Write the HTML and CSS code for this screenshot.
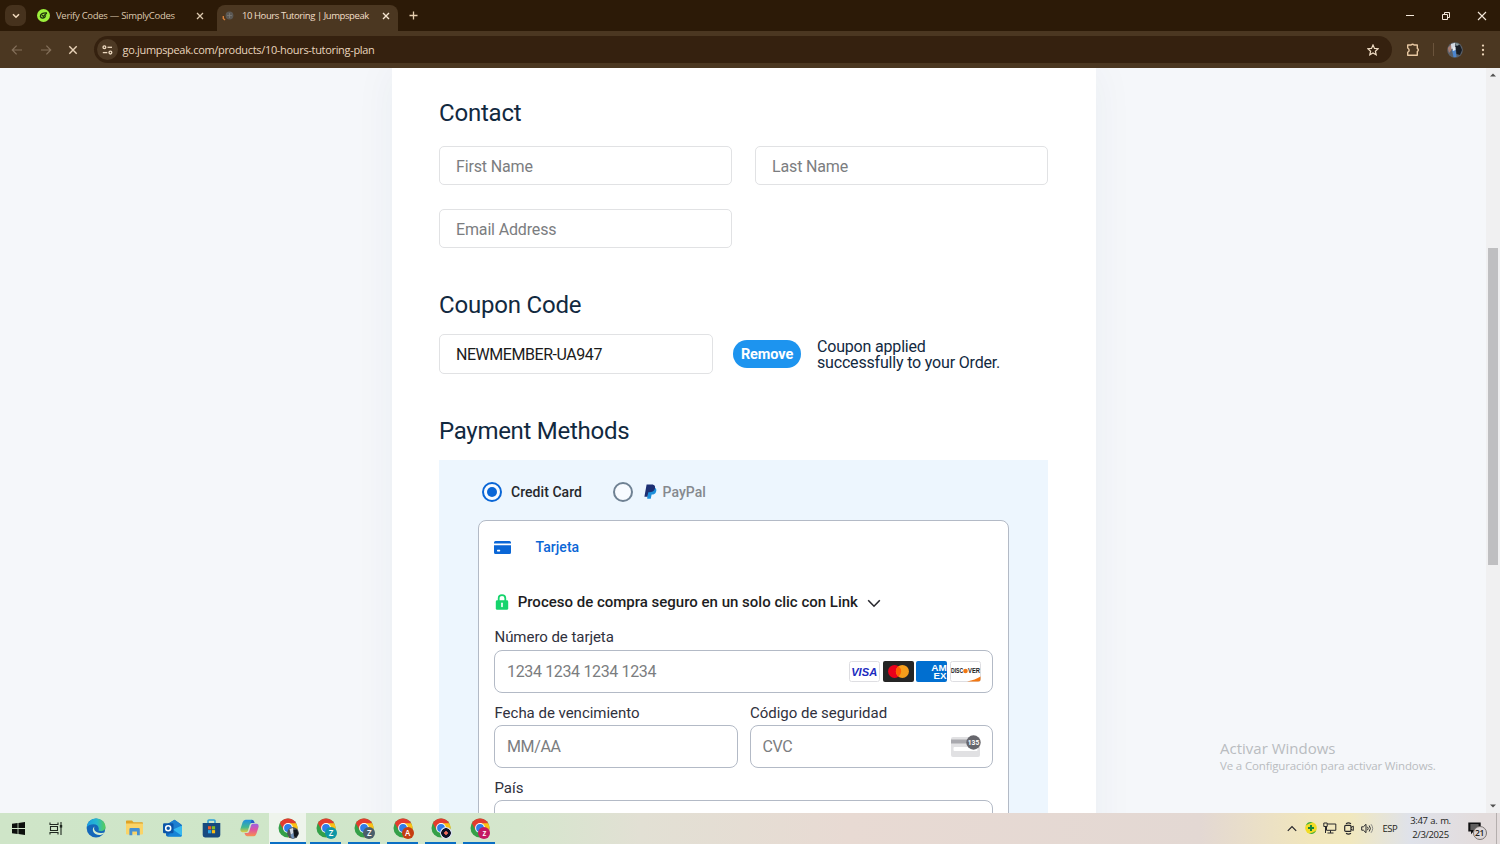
FILE: index.html
```html
<!DOCTYPE html>
<html lang="es">
<head>
    <meta charset="UTF-8">
    <meta name="viewport" content="width=device-width, initial-scale=1.0">
    <title>10 Hours Tutoring | Jumpspeak</title>
    <link rel="stylesheet" href="styles.css">
</head>
<body>

    <!-- Shared Chrome logo -->
    <svg class="defs" width="0" height="0">
        <symbol id="chrome" viewBox="0 0 20 20">
            <circle cx="10" cy="10" r="9.5" fill="#34a048"/>
            <path d="M10 10 L1.8 5.2 A9.5 9.5 0 0 1 18.2 5.2 Z" fill="#e33b2e"/>
            <path d="M10 5.2 H18.2 A9.5 9.5 0 0 1 10 19.5 L14.2 12.4 Z" fill="#fbc116"/>
            <path d="M1.8 5.2 L5.8 12.2 L10 10 L10 5.2 Z" fill="#e33b2e"/>
            <circle cx="10" cy="10" r="4.9" fill="#fff"/>
            <circle cx="10" cy="10" r="3.9" fill="#2f7de9"/>
        </symbol>
    </svg>

    <!-- Tab Strip -->
    <header class="tab-strip">
        <div class="tab-search">
            <svg width="8" height="6" viewBox="0 0 8 6"><path d="M1 1.2 L4 4.2 L7 1.2" fill="none" stroke="#f0d9bd" stroke-width="1.6"/></svg>
        </div>
        <div class="tab">
            <svg class="favicon" width="13" height="13" viewBox="0 0 13 13"><circle cx="6.5" cy="6.5" r="6.5" fill="#9cf03c"/><path d="M9.8 4 C6 3.6 3.2 5 3.4 7.5 C4 9.8 8 9.6 8.7 6.3" fill="none" stroke="#20320c" stroke-width="1.3"/><path d="M5 6.2 L6.3 7.5 L9.8 4" fill="none" stroke="#20320c" stroke-width="1.2"/></svg>
            <span class="tab-title title-codes">Verify Codes — SimplyCodes</span>
            <svg class="tab-close" width="8" height="8" viewBox="0 0 8 8"><path d="M1 1 L7 7 M7 1 L1 7" stroke="#dcc8ae" stroke-width="1.3"/></svg>
        </div>
        <div class="tab tab-active">
            <svg class="favicon" width="12" height="12" viewBox="0 0 12 12"><circle cx="7.5" cy="5.5" r="3.9" fill="#5b5854"/><path d="M5 5.5 H10 M7.5 3 V8" stroke="#7b7873" stroke-width=".8"/><path d="M1.3 6 V8.5 L3 10" fill="none" stroke="#d9803a" stroke-width="1.4"/></svg>
            <span class="tab-title title-tutoring">10 Hours Tutoring | Jumpspeak</span>
            <svg class="tab-close" width="8" height="8" viewBox="0 0 8 8"><path d="M1 1 L7 7 M7 1 L1 7" stroke="#f6e6d2" stroke-width="1.4"/></svg>
        </div>
        <svg class="new-tab" width="9" height="9" viewBox="0 0 9 9"><path d="M4.5 .5 V8.5 M.5 4.5 H8.5" stroke="#e6cfb0" stroke-width="1.3"/></svg>
        <div class="window-buttons">
            <svg width="10" height="10" viewBox="0 0 10 10"><path d="M1 4.5 H9" stroke="#f4e8da" stroke-width="1"/></svg>
            <svg width="10" height="10" viewBox="0 0 10 10"><path d="M1.5 3.5 H6.5 V8.5 H1.5 Z M3.5 3.5 V1.5 H8.5 V6.5 H6.5" fill="none" stroke="#f4e8da" stroke-width="1"/></svg>
            <svg width="10" height="10" viewBox="0 0 10 10"><path d="M1 1 L9 9 M9 1 L1 9" stroke="#f4e8da" stroke-width="1.1"/></svg>
        </div>
    </header>

    <!-- Toolbar -->
    <nav class="toolbar">
        <div class="nav-buttons">
            <svg width="12" height="12" viewBox="0 0 12 12"><path d="M11 6 H1.5 M5.6 1.6 L1.3 6 L5.6 10.4" fill="none" stroke="#84705a" stroke-width="1.2"/></svg>
            <svg width="12" height="12" viewBox="0 0 12 12"><path d="M1 6 H10.5 M6.4 1.6 L10.7 6 L6.4 10.4" fill="none" stroke="#84705a" stroke-width="1.2"/></svg>
            <svg width="10" height="10" viewBox="0 0 10 10"><path d="M1.3 1.3 L8.7 8.7 M8.7 1.3 L1.3 8.7" stroke="#e8d2b8" stroke-width="1.4"/></svg>
        </div>
        <div class="address-bar">
            <div class="site-info">
                <svg width="11" height="10" viewBox="0 0 11 10"><g fill="none" stroke="#ecd8bf" stroke-width="1.3"><circle cx="2.4" cy="2.3" r="1.4"/><path d="M5.5 2.3 H10"/><circle cx="8.4" cy="7.6" r="1.4"/><path d="M.8 7.6 H5.3"/></g></svg>
            </div>
            <span class="url">go.jumpspeak.com/products/10-hours-tutoring-plan</span>
            <svg class="star" width="12" height="12" viewBox="0 0 12 12"><path d="M6 1 L7.5 4.4 L11.2 4.7 L8.4 7.2 L9.2 10.8 L6 8.9 L2.8 10.8 L3.6 7.2 L.8 4.7 L4.5 4.4 Z" fill="none" stroke="#f0dcc3" stroke-width="1.2"/></svg>
        </div>
        <svg class="extensions" width="14" height="14" viewBox="0 0 14 14"><path d="M1.7 2 H5 Q6.6 .4 8.2 2 H11.3 V5.4 Q13.4 7 11.3 8.6 V12.3 H1.7 V9.3 Q4.6 7.2 1.7 5 Z" fill="none" stroke="#e8c8a2" stroke-width="1.4" stroke-linejoin="round"/></svg>
        <span class="separator"></span>
        <svg class="avatar" width="16" height="16" viewBox="0 0 16 16"><circle cx="8" cy="8" r="7.8" fill="#59616b"/><path d="M4 2 L8 .8 L8 6 L4 7 Z" fill="#d3dae3"/><path d="M.8 6 L4 2.5 L4.5 8 L2 11 Z" fill="#a67c70"/><path d="M8.5 4 L13 3 L15 8 L13 13 L9.5 12 Z" fill="#171d25"/><path d="M8 1 L12 2 L10 4 Z" fill="#8ba0a0"/><path d="M5 8 L8.5 7 L9.5 15 L6.5 15.3 Z" fill="#4b86cf"/><path d="M5.5 6 L8.5 5 V8 L6 9 Z" fill="#e9edf1"/></svg>
        <svg class="menu-dots" width="4" height="12" viewBox="0 0 4 12"><g fill="#ecd5b9"><circle cx="2" cy="1.6" r="1.15"/><circle cx="2" cy="6" r="1.15"/><circle cx="2" cy="10.4" r="1.15"/></g></svg>
    </nav>

    <div class="viewport">
        <main class="page">
            <div class="checkout">
                <!-- Contact -->
                <h2 class="title-contact">Contact</h2>
                <div class="contact-fields">
                    <input class="field" type="text" placeholder="First Name">
                    <input class="field" type="text" placeholder="Last Name">
                    <input class="field" type="email" placeholder="Email Address">
                </div>

                <!-- Coupon -->
                <h2 class="title-coupon">Coupon Code</h2>
                <div class="coupon">
                    <input class="field coupon-code" type="text" value="NEWMEMBER-UA947">
                    <button class="btn-remove" type="button">Remove</button>
                    <p class="coupon-message">Coupon applied<br>successfully to your Order.</p>
                </div>

                <!-- Payment -->
                <h2 class="title-payment">Payment Methods</h2>
                <div class="payment">
                    <div class="methods">
                        <span class="radio radio-checked"></span>
                        <span class="method-name">Credit Card</span>
                        <span class="radio"></span>
                        <svg class="paypal-icon" width="13" height="15" viewBox="0 0 13 15"><path d="M3.6 3.6 H9.6 C12.4 4 12.8 6 12 8 C11.3 9.9 9.8 10.5 7.6 10.5 L6.8 14.7 H3.2 Z" fill="#1c8fdb"/><path d="M2.6 .5 H7.8 C10.8 .6 11.7 2.6 10.8 5 C10 7.5 8 8.2 5.2 8.2 H4.3 L3.4 12.7 H.4 Z" fill="#1d2f73"/></svg>
                        <span class="method-name method-paypal">PayPal</span>
                    </div>
                    <div class="card-box">
                        <div class="card-tab">
                            <svg width="17" height="13" viewBox="0 0 17 13"><path d="M1.5 0 H15.5 Q17 0 17 1.5 V2.5 H0 V1.5 Q0 0 1.5 0 Z M0 4.3 H17 V11.5 Q17 13 15.5 13 H1.5 Q0 13 0 11.5 Z" fill="#0a66d6"/><rect x="3" y="8.8" width="3.2" height="1.6" rx=".6" fill="#fff"/></svg>
                            <span>Tarjeta</span>
                        </div>
                        <div class="link-row">
                            <svg width="14" height="16" viewBox="0 0 14 16"><path d="M3.7 7 V4.2 C3.7 0 10.3 0 10.3 4.2 V7" fill="none" stroke="#15d46c" stroke-width="1.8"/><rect x=".8" y="6.3" width="12.4" height="9.5" rx="1.4" fill="#15d46c"/><path d="M7 9.3 V12.4" stroke="#fff" stroke-width="1.6" stroke-linecap="round"/></svg>
                            <span>Proceso de compra seguro en un solo clic con Link</span>
                            <svg class="chevron" width="14" height="9" viewBox="0 0 14 9"><path d="M1.2 1.2 L7 7.2 L12.8 1.2" fill="none" stroke="#27272d" stroke-width="1.6"/></svg>
                        </div>
                        <div class="card-form">
                            <label class="card-field card-number">
                                <span class="label-number">Número de tarjeta</span>
                                <div class="input-box">
                                    <input class="input-number" type="text" placeholder="1234 1234 1234 1234">
                                    <div class="brands">
                                        <svg width="31" height="21" viewBox="0 0 31 21"><rect x=".5" y=".5" width="30" height="20" rx="2" fill="#fff" stroke="#dedee2"/><text x="2.2" y="14.6" textLength="26" lengthAdjust="spacingAndGlyphs" class="visa">VISA</text></svg>
                                        <svg width="31" height="21" viewBox="0 0 31 21"><rect width="31" height="21" rx="2" fill="#252525"/><circle cx="11.6" cy="10.4" r="6.5" fill="#eb001b"/><circle cx="19.4" cy="10.4" r="6.5" fill="#f79e1b"/><path d="M15.5 5.2 A6.5 6.5 0 0 1 15.5 15.6 A6.5 6.5 0 0 1 15.5 5.2 Z" fill="#ff5f00"/></svg>
                                        <svg width="31" height="21" viewBox="0 0 31 21"><rect width="31" height="21" rx="2" fill="#016fd0"/><text x="15.3" y="10" textLength="15.5" lengthAdjust="spacingAndGlyphs" class="amex">AM</text><text x="17.5" y="18" textLength="13" lengthAdjust="spacingAndGlyphs" class="amex">EX</text></svg>
                                        <svg width="31" height="21" viewBox="0 0 31 21"><rect x=".5" y=".5" width="30" height="20" rx="2" fill="#fff" stroke="#dedee2"/><path d="M30.5 15.5 V18.5 Q30.5 20.5 28.5 20.5 H17 Q25.5 18.8 30.5 15.5 Z" fill="#f27712"/><text x="1" y="12.3" textLength="12.2" lengthAdjust="spacingAndGlyphs" class="discover">DISC</text><circle cx="15.5" cy="10" r="2.3" fill="#f27712"/><text x="18" y="12.3" textLength="12" lengthAdjust="spacingAndGlyphs" class="discover">VER</text></svg>
                                    </div>
                                </div>
                            </label>
                            <label class="card-field">
                                <span class="label-expiry">Fecha de vencimiento</span>
                                <div class="input-box"><input type="text" placeholder="MM/AA"></div>
                            </label>
                            <label class="card-field">
                                <span class="label-cvc">Código de seguridad</span>
                                <div class="input-box">
                                    <input class="input-cvc" type="text" placeholder="CVC">
                                    <svg class="cvc-icon" width="31" height="23" viewBox="0 0 31 23"><rect x="1" y="2" width="29" height="20" rx="2" fill="#e1e1e3"/><rect x="1" y="4.5" width="29" height="4" fill="#a9a9ae"/><rect x="3.5" y="12" width="24" height="4" rx="1" fill="#fff"/><circle cx="23.5" cy="7.5" r="7.2" fill="#66666c"/><text x="17.8" y="10.4" textLength="11.4" lengthAdjust="spacingAndGlyphs" class="cvc-digits">135</text></svg>
                                </div>
                            </label>
                            <label class="card-field card-country">
                                <span>País</span>
                                <div class="input-box"></div>
                            </label>
                        </div>
                    </div>
                </div>
            </div>
            <div class="watermark">
                <p class="watermark-title">Activar Windows</p>
                <p class="watermark-text">Ve a Configuración para activar Windows.</p>
            </div>
        </main>
        <div class="scrollbar">
            <svg width="6" height="4" viewBox="0 0 6 4"><path d="M3 .5 L6 3.6 H0 Z" fill="#505050"/></svg>
            <div class="thumb"></div>
            <svg width="6" height="4" viewBox="0 0 6 4"><path d="M3 3.5 L6 .4 H0 Z" fill="#505050"/></svg>
        </div>
    </div>

    <!-- Taskbar -->
    <footer class="taskbar">
        <div class="task task-start"><svg width="13" height="13" viewBox="0 0 13 13"><path d="M0 1.8 L5.6 1 V6.1 H0 Z M6.4 .9 L13 0 V6.1 H6.4 Z M0 6.9 H5.6 V12 L0 11.2 Z M6.4 6.9 H13 V13 L6.4 12.1 Z" fill="#0c0f0c"/></svg></div>
        <div class="task task-view"><svg width="14" height="13" viewBox="0 0 14 13"><path d="M1 .5 V2.5 H9 V.5 M1 12.5 V10.5 H9 V12.5 M1.5 4.5 H8.5 V8.5 H1.5 Z M12 0 V13" fill="none" stroke="#202820" stroke-width="1.1"/><rect x="10.8" y="3" width="2.4" height="2.6" fill="#202820"/></svg></div>
        <div class="task">
            <svg width="20" height="20" viewBox="0 0 20 20"><defs><linearGradient id="edge" x1="0" x2="1"><stop offset="0" stop-color="#1b9de2"/><stop offset=".55" stop-color="#27b9cf"/><stop offset="1" stop-color="#58ce52"/></linearGradient></defs><circle cx="10" cy="10" r="9.4" fill="#1467b9"/><path d="M.7 9 C1.5 3.8 5.5 .6 10.2 .6 C15.6 .6 19.5 4.5 19.5 9 C19.5 12.5 16.5 13.8 13 12.8 C12 12.4 12.8 12 12.8 10.4 C12.6 7.8 10.3 6.2 7.6 6.2 C4.6 6.2 2 7.3 .7 9 Z" fill="url(#edge)"/><path d="M8.6 8.6 C6.7 11.8 10 16.3 17.4 14.7 C18 14.5 18.2 15 17.8 15.4 C15 18 8.3 17.2 7 13 C6.5 11 7.3 9.4 8.6 8.6 Z" fill="#d3ebcf"/></svg>
        </div>
        <div class="task"><svg width="17" height="16" viewBox="0 0 17 16"><path d="M0 1.2 Q0 .5 .8 .5 H6 L7.5 2.3 H16 Q17 2.3 17 3.3 V5 H0 Z" fill="#dfa326"/><path d="M0 3.4 H17 V13.7 Q17 14.5 16 14.5 H1 Q0 14.5 0 13.7 Z" fill="#fad468"/><path d="M3.4 15.3 V9.2 Q3.4 8 4.6 8 H12.6 Q13.8 8 13.8 9.2 V15.3 H11 V11.6 H6.3 V15.3 Z" fill="#4590d2"/></svg></div>
        <div class="task"><svg width="20" height="18" viewBox="0 0 20 18"><path d="M3 6 L11.5 .8 L19 6 V16 Q19 17.4 17.6 17.4 H4.5 Q3 17.4 3 16 Z" fill="#126ac0"/><path d="M5.5 4.5 L11.5 .8 L17.5 5 V10 H5.5 Z" fill="#1d7fd0"/><path d="M10 10.5 L19 6.5 V16 Q19 17.4 17.6 17.4 H8 Z" fill="#36b8ef"/><path d="M10 10.5 L19 17 Q18.5 17.4 17.6 17.4 H4.5 Z" fill="#1683d6"/><rect x="0" y="4.2" width="10.5" height="10" rx="1.2" fill="#0b55a8"/><circle cx="5.2" cy="9.2" r="2.5" fill="none" stroke="#fff" stroke-width="1.5"/></svg></div>
        <div class="task"><svg width="19" height="19" viewBox="0 0 19 19"><path d="M6 4.5 V1.8 Q6 .9 7 .9 H12 Q13 .9 13 1.8 V4.5" fill="none" stroke="#2c9fd9" stroke-width="1.5"/><path d="M.7 4 H18.3 V16 Q18.3 18.4 16 18.4 H3 Q.7 18.4 .7 16 Z" fill="#17497f"/><rect x="6" y="7.2" width="3.2" height="3.2" fill="#ef5a2b"/><rect x="9.9" y="7.2" width="3.2" height="3.2" fill="#84bc25"/><rect x="6" y="11.1" width="3.2" height="3.2" fill="#2ca6e5"/><rect x="9.9" y="11.1" width="3.2" height="3.2" fill="#fbbc16"/></svg></div>
        <div class="task">
            <svg width="19" height="18" viewBox="0 0 19 18"><defs><linearGradient id="copA" x1="0" y1="0" x2="0" y2="1"><stop offset="0" stop-color="#1f8de3"/><stop offset=".6" stop-color="#43b890"/><stop offset="1" stop-color="#e6ca3c"/></linearGradient><linearGradient id="copB" x1="0" y1="0" x2="0" y2="1"><stop offset="0" stop-color="#9a62e6"/><stop offset=".5" stop-color="#e0559c"/><stop offset="1" stop-color="#f7924d"/></linearGradient></defs><path d="M5.6 .7 H11.8 Q13.4 .7 14 2.5 L14.5 4 H11.8 Q10.4 4 9.8 5.5 L7.8 12 Q7.2 13.3 5.8 13.3 H2.4 Q-.2 13.2 .5 9.8 L2.6 3.3 Q3.4 .7 5.6 .7 Z" fill="url(#copA)"/><path d="M13.4 17.3 H7.2 Q5.6 17.3 5 15.5 L4.5 14 H7.2 Q8.6 14 9.2 12.5 L11.2 6 Q11.8 4.7 13.2 4.7 H16.6 Q19.2 4.8 18.5 8.2 L16.4 14.7 Q15.6 17.3 13.4 17.3 Z" fill="url(#copB)"/><path d="M11.8 .7 Q13.4 .7 14 2.5 L14.5 4 H10.5 Z" fill="#2459c9"/></svg>
        </div>
        <div class="task task-running task-current">
            <svg class="chrome-icon"><use href="#chrome"/></svg>
            <svg class="profile" width="12" height="12" viewBox="0 0 12 12"><circle cx="6" cy="6" r="6" fill="#4e545b"/><path d="M2.5 2 L6 1 L6.5 6 L4 8 Z" fill="#cfd9e4"/><path d="M6.5 3 L10 2.5 L11.5 7 L9 10.5 L7 9 Z" fill="#11161c"/><path d="M3.5 8 L6.5 6 L7 11.5 H5 Z" fill="#6f93bd"/></svg>
        </div>
        <div class="task task-running"><svg class="chrome-icon"><use href="#chrome"/></svg><span class="profile profile-teal">Z</span></div>
        <div class="task task-running"><svg class="chrome-icon"><use href="#chrome"/></svg><span class="profile profile-slate">Z</span></div>
        <div class="task task-running"><svg class="chrome-icon"><use href="#chrome"/></svg><span class="profile profile-orange">A</span></div>
        <div class="task task-running"><svg class="chrome-icon"><use href="#chrome"/></svg><span class="profile profile-dark"></span></div>
        <div class="task task-running"><svg class="chrome-icon"><use href="#chrome"/></svg><span class="profile profile-pink">z</span></div>

        <div class="tray">
            <svg width="10" height="7" viewBox="0 0 10 7"><path d="M.8 5.8 L5 1.5 L9.2 5.8" fill="none" stroke="#26262a" stroke-width="1.2"/></svg>
            <svg width="12" height="12" viewBox="0 0 12 12"><circle cx="6" cy="6" r="5.9" fill="#f2dc26"/><path d="M.8 3.5 A5.9 5.9 0 0 1 8 .5 C5 1 3 2 .8 3.5 Z M11.2 8.5 A5.9 5.9 0 0 1 4 11.5 C7 11 9 10 11.2 8.5 Z" fill="#3fae49"/><path d="M6 3 V9 M3 6 H9" stroke="#15853d" stroke-width="2"/></svg>
            <svg width="14" height="12" viewBox="0 0 14 12"><path d="M4.5 2 H12.8 V8.3 H3.5 V5 M7.5 8.3 V11 M4.5 11 H10.5 M.8 1 H4.2 V4.5 H.8 Z M2.5 4.5 V11" fill="none" stroke="#28282a" stroke-width="1"/></svg>
            <svg width="10" height="13" viewBox="0 0 10 13"><path d="M2 1.8 Q4.5 0 7 1.8 M2 11.2 Q4.5 13 7 11.2" fill="none" stroke="#28282a" stroke-width="1.1"/><rect x=".7" y="3.4" width="6.3" height="6" rx="1" fill="none" stroke="#28282a" stroke-width="1.2"/><path d="M7 5.5 L9.3 4.2 V8.5 L7 7.2" fill="none" stroke="#28282a"/></svg>
            <svg width="13" height="11" viewBox="0 0 13 11"><path d="M.7 3.8 H2.4 L5 1.3 V9.7 L2.4 7.2 H.7 Z M6.5 3.8 Q7.8 5.5 6.5 7.2 M8.2 2.5 Q10.6 5.5 8.2 8.5" fill="none" stroke="#28282a"/><path d="M10 1.2 Q13.4 5.5 10 9.8" fill="none" stroke="#8b8b88"/></svg>
            <span class="language">ESP</span>
            <div class="clock"><span class="time">3:47 a. m.</span><span class="date">2/3/2025</span></div>
            <div class="notifications">
                <svg width="13" height="13" viewBox="0 0 13 13"><path d="M.3 .5 H12.7 V9.5 H5.5 L3 12.3 V9.5 H.3 Z" fill="#101012"/><path d="M2.4 3 H10.6 M2.4 5 H10.6 M2.4 7 H10.6" stroke="#d9d5d4" stroke-width=".8"/></svg>
                <span class="count">21</span>
            </div>
            <span class="show-desktop"></span>
        </div>
    </footer>

</body>
</html>
```
FILE: styles.css
```css
:root {
    --frame-color: #2c1a07;
    --toolbar-color: #4b3721;
    --omnibox-color: #35210f;
    --heading-color: #12293f;
    --page-color: #f5f7fa;
    --panel-color: #edf6fe;
    --primary-color: #1d94ef;
    --stripe-blue: #0a66d6;
    --stripe-border: #b3bac6;
    --field-border: #e1e2e4;
    --placeholder: #7b7d80;
    --ui-font: "Open Sans", "Noto Sans", sans-serif;
}

* {
    margin: 0;
    padding: 0;
    box-sizing: border-box;
}

body {
    display: flex;
    flex-direction: column;
    height: 844px;
    overflow: hidden;
    font-family: Roboto, sans-serif;
    background-color: var(--page-color);
}

svg {
    display: block;
    flex-shrink: 0;
}

.defs {
    display: none;
}

/* Tab Strip */
.tab-strip {
    display: flex;
    align-items: center;
    height: 31px;
    padding-left: 5px;
    background-color: var(--frame-color);
    font-family: var(--ui-font);
    flex-shrink: 0;
}

.tab-search {
    display: flex;
    align-items: center;
    justify-content: center;
    width: 21px;
    height: 21px;
    border-radius: 7px;
    background-color: #46321d;
}

.tab {
    display: flex;
    align-items: center;
    width: 191px;
    height: 31px;
    padding-left: 11px;
    color: #dcc8ae;
    font-size: 9.5px;
    white-space: nowrap;
}

.tab-title {
    margin-left: 6px;
}

.tab-close {
    margin-left: auto;
    margin-right: 13px;
}

.tab-active {
    width: 181px;
    height: 26px;
    align-self: flex-end;
    padding: 0 0 4px 5px;
    color: #f2dfc8;
    background-color: var(--toolbar-color);
    border-radius: 8px 8px 0 0;
}

.tab-active .tab-title {
    margin-left: 8px;
    margin-top: -1px;
}

.tab-active .tab-close {
    margin-right: 8px;
}

.title-codes {
    letter-spacing: -0.29px;
}

.title-tutoring {
    letter-spacing: -0.43px;
}

.new-tab {
    margin-left: 11px;
}

.window-buttons {
    display: flex;
    gap: 26px;
    margin-left: auto;
    margin-right: 13px;
}

/* Toolbar */
.toolbar {
    display: flex;
    align-items: center;
    height: 37px;
    padding-left: 11px;
    background-color: var(--toolbar-color);
    flex-shrink: 0;
}

.nav-buttons {
    display: flex;
    align-items: center;
    gap: 16.5px;
    width: 82.5px;
}

.address-bar {
    display: flex;
    align-items: center;
    width: 1298px;
    height: 27px;
    padding-left: 3px;
    border-radius: 14px;
    background-color: var(--omnibox-color);
}

.site-info {
    display: flex;
    align-items: center;
    justify-content: center;
    width: 21px;
    height: 21px;
    border-radius: 50%;
    background-color: #4d3924;
}

.url {
    margin-left: 5px;
    margin-top: -1px;
    font-family: var(--ui-font);
    font-size: 11px;
    letter-spacing: -0.32px;
    color: #e9d5bd;
}

.star {
    margin-left: auto;
    margin-right: 12.5px;
}

.extensions {
    margin-left: 14.5px;
}

.separator {
    width: 1px;
    height: 13px;
    margin-left: 12.5px;
    background-color: #6b543c;
}

.avatar {
    margin-left: 13.5px;
}

.menu-dots {
    margin-left: 18px;
}

/* Page */
.viewport {
    display: flex;
    height: 745px;
    overflow: hidden;
    flex-shrink: 0;
}

.page {
    position: relative;
    width: 1486px;
    padding-left: 392px;
    overflow: hidden;
}

.checkout {
    width: 704px;
    height: 900px;
    padding: 30px 48px 0 47px;
    background-color: #fff;
    box-shadow: 0 0 40px rgba(40, 60, 90, 0.05);
}

h2 {
    height: 30px;
    font-size: 24px;
    font-weight: 400;
    line-height: 30px;
    letter-spacing: -0.2px;
    color: var(--heading-color);
}

.title-payment {
    letter-spacing: -0.28px;
}

.contact-fields {
    display: grid;
    grid-template-columns: 293px 293px;
    gap: 24px 23px;
    margin: 18px 0 41.5px;
}

.field {
    height: 39px;
    padding: 2px 16px 0;
    border: 1px solid var(--field-border);
    border-radius: 5px;
    background-color: #fff;
    font-family: Roboto, sans-serif;
    font-size: 16px;
    color: #1b1b1b;
    outline: none;
}

input::placeholder {
    color: var(--placeholder);
    opacity: 1;
}

.field::placeholder {
    letter-spacing: -0.15px;
}

.coupon {
    display: flex;
    align-items: center;
    margin: 14px 0 42px;
}

.coupon-code {
    width: 274px;
    height: 40px;
    letter-spacing: -0.45px;
}

.btn-remove {
    width: 68px;
    height: 28px;
    padding-top: 1px;
    margin-left: 20px;
    border: none;
    border-radius: 14px;
    background-color: var(--primary-color);
    color: #fff;
    font-family: Roboto, sans-serif;
    font-size: 14.5px;
    font-weight: 700;
    letter-spacing: -0.1px;
}

.coupon-message {
    margin-left: 16px;
    padding-top: 2px;
    font-size: 16px;
    line-height: 16px;
    letter-spacing: -0.18px;
    color: var(--heading-color);
    white-space: nowrap;
}

/* Payment */
.payment {
    height: 500px;
    margin-top: 14px;
    padding: 22px 39px 0;
    background-color: var(--panel-color);
}

.methods {
    display: flex;
    align-items: center;
    height: 20px;
    margin-left: 4px;
}

.radio {
    display: flex;
    align-items: center;
    justify-content: center;
    width: 20px;
    height: 20px;
    border: 2px solid #6f8193;
    border-radius: 50%;
    background-color: #f8fbff;
}

.radio-checked {
    border: 2px solid var(--stripe-blue);
}

.radio-checked::after {
    content: "";
    width: 10px;
    height: 10px;
    border-radius: 50%;
    background-color: var(--stripe-blue);
}

.method-name {
    width: 111px;
    padding-left: 9px;
    font-size: 14px;
    font-weight: 500;
    letter-spacing: 0.05px;
    color: #26282c;
}

.paypal-icon {
    margin-left: 11px;
}

.method-paypal {
    padding-left: 5.5px;
    color: #85898e;
}

.card-box {
    width: 531px;
    height: 460px;
    margin-top: 18px;
    padding: 0 15px;
    border: 1px solid var(--stripe-border);
    border-radius: 8px;
    background-color: #fff;
}

.card-tab {
    display: flex;
    align-items: center;
    gap: 24.5px;
    height: 53px;
    font-size: 14px;
    font-weight: 500;
    letter-spacing: 0.05px;
    color: var(--stripe-blue);
}

.link-row {
    display: flex;
    align-items: center;
    height: 20px;
    margin-top: 18px;
    padding-left: 1px;
    gap: 8.7px;
    font-size: 15px;
    font-weight: 500;
    color: #1d1d22;
}

.chevron {
    margin-top: 4px;
}

.card-form {
    display: grid;
    grid-template-columns: 244px 243px;
    column-gap: 12px;
    margin-top: 15px;
}

.card-field {
    height: 75px;
    font-size: 15px;
    line-height: 20px;
    letter-spacing: -0.02px;
    color: #30313d;
}

.label-number {
    letter-spacing: -0.05px;
}

.card-number,
.card-country {
    grid-column: span 2;
}

.input-box {
    display: flex;
    align-items: center;
    height: 43px;
    margin-top: 3px;
    padding: 0 12px;
    border: 1px solid var(--stripe-border);
    border-radius: 8px;
}

.card-field span {
    display: block;
    height: 20px;
    padding: 1px 0 0 0.5px;
}

.card-field .label-number {
    padding-top: 0;
}

.card-field .label-cvc {
    padding-left: 0;
}

.input-box input {
    flex: 1;
    min-width: 0;
    border: none;
    outline: none;
    font-family: Roboto, sans-serif;
    font-size: 16px;
    letter-spacing: -0.35px;
}

.input-box .input-cvc {
    margin-left: -0.5px;
}

.brands {
    display: flex;
    gap: 2.7px;
    margin-right: -1px;
}

.cvc-icon {
    margin-right: -1px;
}

.visa {
    font: italic 700 11.5px "Liberation Sans", sans-serif;
    letter-spacing: 0;
    fill: #1a2bc0;
}

.amex {
    font: 700 9.5px "Liberation Sans", sans-serif;
    letter-spacing: 0;
    fill: #fff;
}

.discover {
    font: 700 6.5px "Liberation Sans", sans-serif;
    letter-spacing: 0;
    fill: #222;
}

.cvc-digits {
    font: 700 8px Roboto, sans-serif;
    letter-spacing: 0;
    fill: #fff;
}

/* Windows activation notice */
.watermark {
    position: absolute;
    left: 1220px;
    top: 670px;
    font-family: var(--ui-font);
    color: #b9bcc0;
    white-space: nowrap;
}

.watermark-title {
    font-size: 15px;
    line-height: 21px;
}

.watermark-text {
    font-size: 11.5px;
    line-height: 15px;
    letter-spacing: -0.15px;
    margin-top: -1px;
}

/* Scrollbar */
.scrollbar {
    display: flex;
    flex-direction: column;
    align-items: center;
    justify-content: space-between;
    width: 14px;
    padding: 5px 0;
    background-color: #f0f0f1;
}

.thumb {
    width: 10px;
    height: 317px;
    margin-top: -68px;
    background-color: #bfbfc1;
}

/* Taskbar */
.taskbar {
    display: flex;
    height: 31px;
    background: linear-gradient(90deg, #cfe5c8 0, #cfe6c9 300px, #d5e6cd 520px, #e2e0d4 640px, #e8dad3 850px, #e3d8d3 1200px, #f1e6bc 1310px, #f1e8be 1350px, #dfe2ea 1410px, #e3dcdc 1480px);
    flex-shrink: 0;
    font-family: var(--ui-font);
}

.task {
    position: relative;
    display: flex;
    align-items: center;
    justify-content: center;
    width: 38.35px;
    padding-bottom: 1px;
    flex-shrink: 0;
}

.task-start {
    width: 37px;
}

.task-view {
    width: 39.9px;
    padding-right: 1px;
}

.task-running::after {
    content: "";
    position: absolute;
    left: 3px;
    right: 4px;
    bottom: 0;
    height: 2px;
    background-color: #0a6fc4;
}

.task-current {
    background: linear-gradient(#eef4ec, #eef4ec) center / 37px 100% no-repeat;
}

.task-current::after {
    left: 1px;
    right: 1px;
}

.chrome-icon {
    width: 20px;
    height: 20px;
}

.profile {
    position: absolute;
    left: 18px;
    top: 13.5px;
    width: 12px;
    height: 12px;
    border-radius: 50%;
    color: #fff;
    font-size: 8px;
    font-weight: 600;
    line-height: 12px;
    text-align: center;
}

.profile-teal {
    background-color: #0f96a6;
}

.profile-slate {
    background-color: #4a5f6b;
}

.profile-orange {
    background-color: #c53d10;
}

.profile-dark {
    background: radial-gradient(circle, #f06a5c 0 1.5px, #0d1226 2px 4.5px, #d7dcee 5px);
}

.profile-pink {
    background-color: #c41763;
}

/* Tray */
.tray {
    display: flex;
    align-items: center;
    margin-left: auto;
    padding-bottom: 1px;
    color: #1e1e20;
}

.tray svg {
    margin-right: 7px;
}

.tray svg:nth-child(2) {
    margin-left: 1px;
    margin-right: 6px;
}

.language {
    width: 28.5px;
    margin-left: 2px;
    font-size: 9.5px;
    letter-spacing: -0.45px;
}

.clock {
    display: flex;
    flex-direction: column;
    align-items: center;
    width: 39px;
    font-size: 9.5px;
    line-height: 14px;
    letter-spacing: -0.4px;
    white-space: nowrap;
}

.time {
    word-spacing: 0.6px;
    letter-spacing: -0.35px;
}

.notifications {
    position: relative;
    width: 13px;
    margin-left: 17.5px;
}

.count {
    position: absolute;
    left: 5px;
    top: 4px;
    width: 14px;
    height: 14px;
    border: 1px solid #77716f;
    border-radius: 50%;
    background-color: #ddd7d8;
    font-size: 8.5px;
    font-weight: 600;
    letter-spacing: -0.3px;
    line-height: 12px;
    text-align: center;
}

.show-desktop {
    width: 1px;
    height: 31px;
    margin-left: 15.5px;
    margin-right: 3px;
    background-color: #b5afae;
}
```
